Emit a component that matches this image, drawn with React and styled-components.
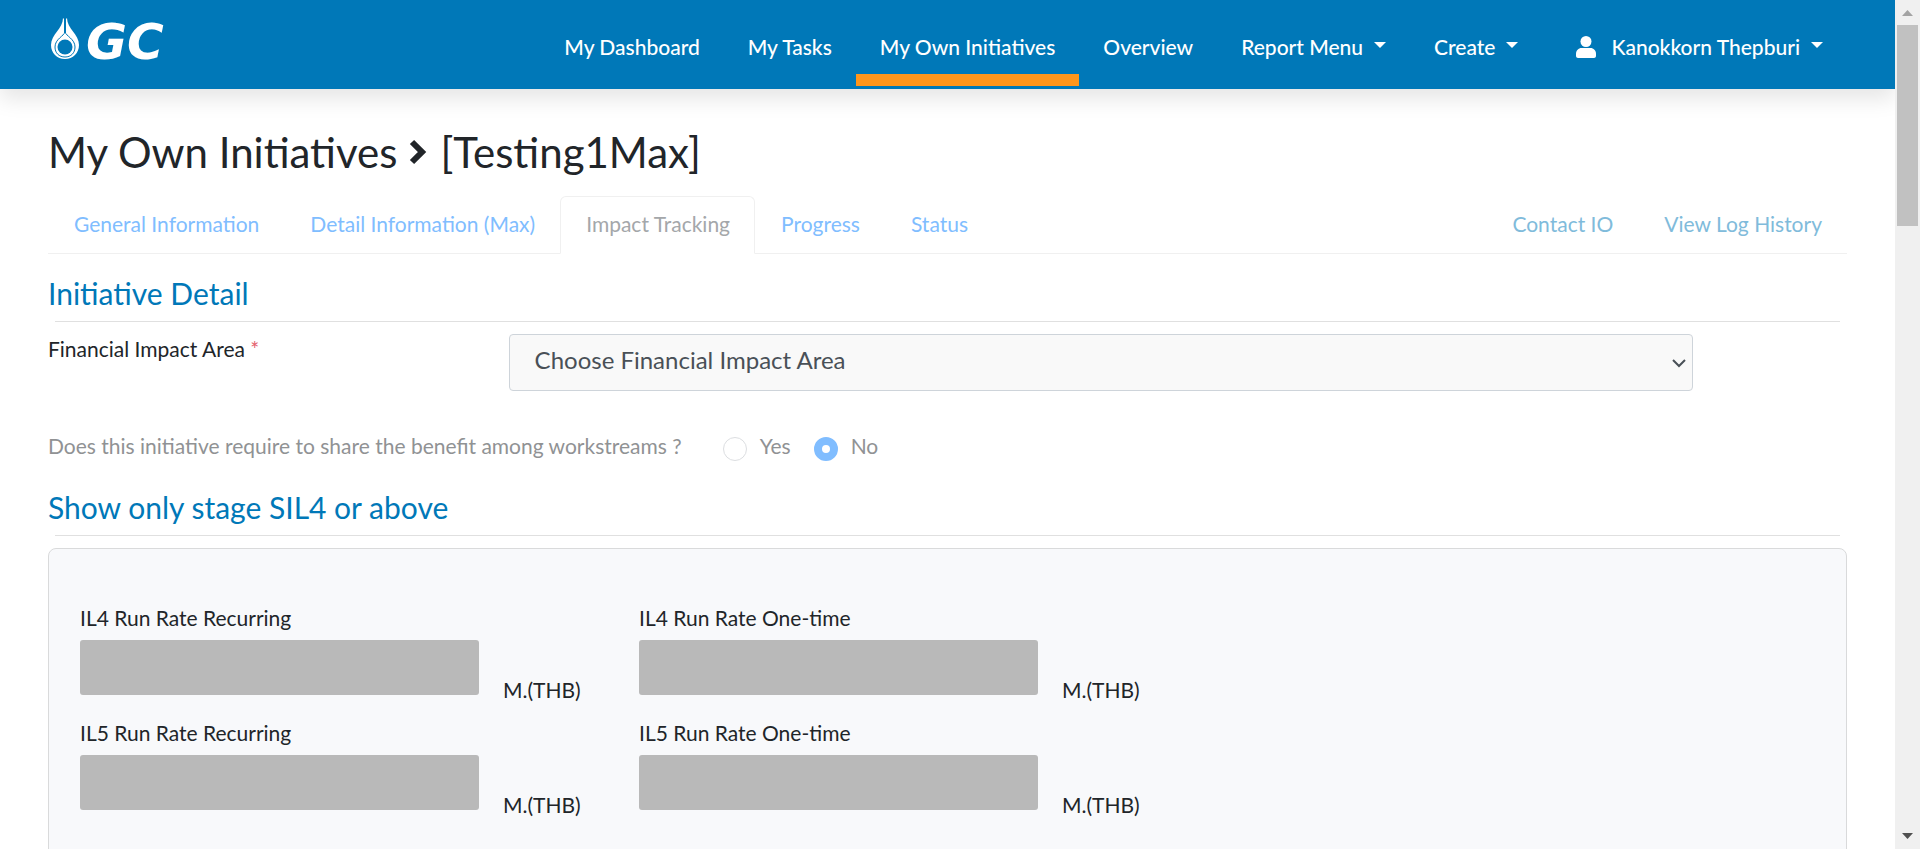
import React from "react";
import styled, { createGlobalStyle, css } from "styled-components";

const GlobalStyle = createGlobalStyle`
  *, *::before, *::after { box-sizing: border-box; }
  body {
    margin: 0;
    background: #fff;
    color: #212529;
    font-family: Lato, "Noto Sans", sans-serif;
    font-size: 21px;
    line-height: 30px;
  }
`;

const Shell = styled.div`
  display: flex;
  height: 100vh;
  overflow: hidden;
`;

const Page = styled.div`
  flex: 1;
  min-width: 0;
  overflow: hidden;
`;

const Header = styled.header`
  display: flex;
  align-items: flex-start;
  justify-content: space-between;
  height: 89px;
  padding: 0 48px;
  background: #0078b8;
  box-shadow: 0 10px 20px rgba(0, 0, 0, 0.1);
`;

const Brand = styled.a`
  display: flex;
  gap: 4px;
  margin-top: 17px;
  color: #fff;
  text-decoration: none;
`;

const BrandName = styled.span`
  font: italic 700 50px/50px "DejaVu Sans", sans-serif;
`;

const Nav = styled.nav`
  display: flex;
`;

const navItem = css`
  display: flex;
  align-items: center;
  height: 86px;
  padding: 20px 24px 0;
  border: 0;
  border-bottom: 12px solid ${(p) => (p.$active ? "#ff961b" : "transparent")};
  background: none;
  color: #fff;
  font: inherit;
  font-weight: 500;
  text-decoration: none;
  white-space: nowrap;
`;

const NavLink = styled.a`
  ${navItem}
`;

const NavMenu = styled.button`
  ${navItem}
  margin-left: ${(p) => (p.$separate ? "10px" : "0")};
`;

const Caret = styled.span`
  margin: 0 0 4px 11px;
  border: 6px solid transparent;
  border-top-color: #fff;
  border-bottom: 0;
`;

const UserIcon = styled.svg`
  width: 20px;
  height: 22px;
  margin-right: 15px;
`;

const Main = styled.main`
  padding: 38px 48px 0;
`;

const Title = styled.h1`
  display: flex;
  align-items: center;
  gap: 12px;
  margin: 0 0 19px;
  font-size: 42px;
  font-weight: 400;
  line-height: 50px;
`;

const TitleArrow = styled.svg`
  width: 19px;
  height: 26px;
`;

const Tabs = styled.nav`
  display: flex;
  border-bottom: 1px solid #f0f0f0;
`;

const Tab = styled.a`
  height: 58px;
  margin-bottom: -1px;
  margin-left: ${(p) => (p.$push ? "auto" : "0")};
  padding: 12px 24px 0 25px;
  border: 1px solid transparent;
  border-radius: 6px 6px 0 0;
  color: ${(p) => (p.$muted ? "#80bbdb" : "#80bdff")};
  text-decoration: none;
  white-space: nowrap;
  ${(p) =>
    p.$active &&
    css`
      border-color: #f0f0f0 #f0f0f0 #fff;
      background: #fff;
      color: #a4a7aa;
    `}
`;

const SectionTitle = styled.h2`
  margin: 0;
  color: #0078b8;
  font-size: 30px;
  font-weight: 400;
  line-height: 36px;
`;

const Rule = styled.hr`
  height: 1px;
  margin: 10px 7px 12px;
  border: 0;
  background: #e0e0e0;
`;

const Section = styled.section`
  margin-top: ${(p) => (p.$first ? "21px" : "28px")};
`;

const FormRow = styled.div`
  display: grid;
  grid-template-columns: 7fr 18fr;
  align-items: start;
  padding-right: 154px;
`;

const Required = styled.span`
  color: #e4606d;
`;

const SelectBox = styled.div`
  position: relative;
`;

const Select = styled.select`
  display: block;
  width: 100%;
  height: 57px;
  padding: 0 48px 6px 25px;
  border: 1px solid #ced4da;
  border-radius: 4px;
  appearance: none;
  background: #f9f9f9;
  color: #495057;
  font: inherit;
  font-size: 24px;
`;

const SelectArrow = styled.svg`
  position: absolute;
  top: 24px;
  right: 6px;
  width: 16px;
  height: 10px;
  pointer-events: none;
`;

const Question = styled.fieldset`
  display: flex;
  align-items: flex-start;
  height: 30px;
  margin: 40px 0 0;
  padding: 0;
  border: 0;
  color: #909294;
`;

const Legend = styled.legend`
  float: left;
  margin-right: 41px;
  padding: 0;
`;

const Choice = styled.label`
  display: flex;
  align-items: flex-start;
  gap: 13px;
  margin-right: 23px;
`;

const Radio = styled.input`
  width: 24px;
  height: 24px;
  margin: 6px 0 0;
  border: 1px solid #dcdee1;
  border-radius: 50%;
  appearance: none;
  background: #fff;
  &:checked {
    border: 8px solid #80bdff;
  }
`;

const Card = styled.div`
  display: grid;
  grid-template-columns: repeat(3, 1fr);
  row-gap: 13px;
  min-height: 480px;
  align-content: start;
  padding: 54px 89px 54px 31px;
  border: 1px solid #d9dadb;
  border-radius: 8px;
  background: #f8f9fb;
`;

const Field = styled.div`
  grid-column: ${(p) => p.$column};
`;

const FieldLabel = styled.label`
  display: block;
  margin-bottom: 7px;
`;

const FieldLine = styled.div`
  display: flex;
  gap: 24px;
  height: 65px;
`;

const Amount = styled.input`
  flex: 1;
  min-width: 0;
  height: 55px;
  border: 0;
  border-radius: 3px;
  background: #b9b9b9;
`;

const Unit = styled.span`
  align-self: flex-end;
  width: 136px;
`;

const ScrollTrack = styled.div`
  display: flex;
  flex: none;
  flex-direction: column;
  align-items: center;
  width: 25px;
  padding: 10px 0;
  background: #f0f0f0;
`;

const ScrollThumb = styled.div`
  width: 21px;
  height: 201px;
  margin: 9px 0 auto;
  background: #c1c1c1;
`;

const ScrollArrow = styled.svg`
  width: 11px;
  height: 6px;
`;

const fields = [
  { id: "il4-recurring", label: "IL4 Run Rate Recurring", column: 1 },
  { id: "il4-onetime", label: "IL4 Run Rate One-time", column: 2 },
  { id: "il5-recurring", label: "IL5 Run Rate Recurring", column: 1 },
  { id: "il5-onetime", label: "IL5 Run Rate One-time", column: 2 },
];

function Flame() {
  return (
    <svg width="34" height="44" viewBox="0 0 34 44" aria-hidden="true">
      <path
        fill="#fff"
        d="M15 1C15 12 3 17 3 28c0 8 6 14 14 14s14-6 14-14C31 17 19 12 19 1l-1 1v11l-1 3-1-3V2Z"
      />
      <path
        fill="none"
        stroke="#0078b8"
        strokeWidth="1"
        d="M17 15c-1 4-10 7-10 15 0 6 4 10 10 10s10-4 10-10c0-8-9-11-10-15Z"
      />
      <circle cx="17" cy="30" r="7.5" fill="#0078b8" />
      <path stroke="#0078b8" strokeWidth="2" d="M17 2v14" />
    </svg>
  );
}

export default function App() {
  return (
    <>
      <GlobalStyle />
      <Shell>
        <Page>
          <Header>
            <Brand href="#home">
              <Flame />
              <BrandName>GC</BrandName>
            </Brand>
            <Nav>
              <NavLink href="#dashboard">My Dashboard</NavLink>
              <NavLink href="#tasks">My Tasks</NavLink>
              <NavLink href="#initiatives" $active>My Own Initiatives</NavLink>
              <NavLink href="#overview">Overview</NavLink>
              <NavMenu type="button">Report Menu<Caret /></NavMenu>
              <NavMenu type="button">Create<Caret /></NavMenu>
              <NavMenu type="button" $separate>
                <UserIcon viewBox="0 0 20 22" fill="#fff" aria-hidden="true">
                  <circle cx="10" cy="5.5" r="5.5" />
                  <path d="M5.500 12h9c3 0 5.500 2.500 5.500 5.500V20c0 1-1 2-2 2H2c-1 0-2-1-2-2v-2.500C0 14.500 2.500 12 5.500 12Z" />
                </UserIcon>
                Kanokkorn Thepburi<Caret />
              </NavMenu>
            </Nav>
          </Header>
          <Main>
            <Title>
              My Own Initiatives
              <TitleArrow viewBox="0 0 19 26" aria-hidden="true">
                <path d="m3 3 10 10L3 23" fill="none" stroke="#212529" strokeWidth="6" />
              </TitleArrow>
              [Testing1Max]
            </Title>
            <Tabs>
              <Tab href="#general">General Information</Tab>
              <Tab href="#detail">Detail Information (Max)</Tab>
              <Tab href="#impact" $active>Impact Tracking</Tab>
              <Tab href="#progress">Progress</Tab>
              <Tab href="#status">Status</Tab>
              <Tab href="#contact" $muted $push>Contact IO</Tab>
              <Tab href="#log" $muted>View Log History</Tab>
            </Tabs>
            <Section $first>
              <SectionTitle>Initiative Detail</SectionTitle>
              <Rule />
              <FormRow>
                <label htmlFor="impact-area">
                  Financial Impact Area <Required>*</Required>
                </label>
                <SelectBox>
                  <Select id="impact-area">
                    <option>Choose Financial Impact Area</option>
                  </Select>
                  <SelectArrow viewBox="0 0 16 10" aria-hidden="true">
                    <path d="m2 2 6 6 6-6" fill="none" stroke="#495057" strokeWidth="2" />
                  </SelectArrow>
                </SelectBox>
              </FormRow>
              <Question>
                <Legend>Does this initiative require to share the benefit among workstreams ?</Legend>
                <Choice>
                  <Radio type="radio" name="share" />
                  Yes
                </Choice>
                <Choice>
                  <Radio type="radio" name="share" defaultChecked />
                  No
                </Choice>
              </Question>
            </Section>
            <Section>
              <SectionTitle>Show only stage SIL4 or above</SectionTitle>
              <Rule />
              <Card>
                {fields.map((f) => (
                  <Field key={f.id} $column={f.column}>
                    <FieldLabel htmlFor={f.id}>{f.label}</FieldLabel>
                    <FieldLine>
                      <Amount id={f.id} disabled />
                      <Unit>M.(THB)</Unit>
                    </FieldLine>
                  </Field>
                ))}
              </Card>
            </Section>
          </Main>
        </Page>
        <ScrollTrack aria-hidden="true">
          <ScrollArrow viewBox="0 0 11 6"><path d="M0 6 5.500 0 11 6Z" fill="#a3a3a3" /></ScrollArrow>
          <ScrollThumb />
          <ScrollArrow viewBox="0 0 11 6"><path d="M0 0h11L5.500 6Z" fill="#505050" /></ScrollArrow>
        </ScrollTrack>
      </Shell>
    </>
  );
}
